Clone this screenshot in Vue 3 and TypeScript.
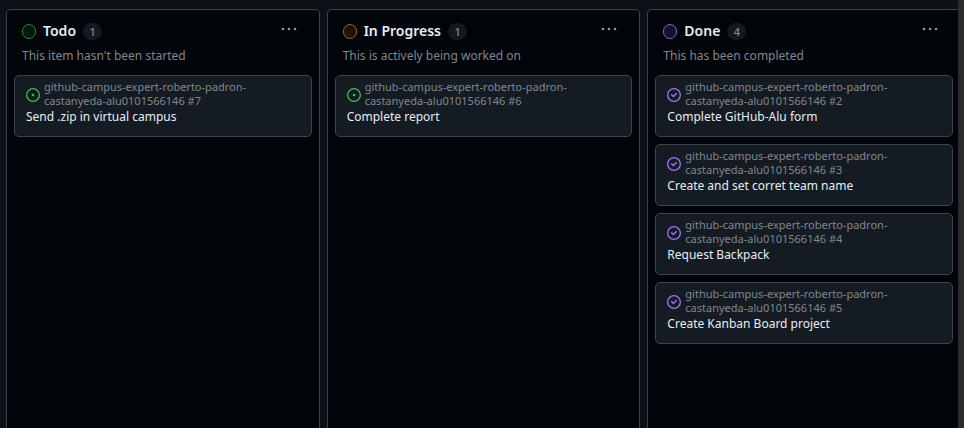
<script setup lang="ts">
type Tone = 'green' | 'amber' | 'purple'

interface Item {
  number: number
  title: string
}

interface Column {
  name: string
  description: string
  tone: Tone
  closed: boolean
  items: Item[]
}

const repository = 'github-campus-expert-roberto-padron-castanyeda-alu0101566146'

const columns: Column[] = [
  {
    name: 'Todo',
    description: "This item hasn't been started",
    tone: 'green',
    closed: false,
    items: [{ number: 7, title: 'Send .zip in virtual campus' }],
  },
  {
    name: 'In Progress',
    description: 'This is actively being worked on',
    tone: 'amber',
    closed: false,
    items: [{ number: 6, title: 'Complete report' }],
  },
  {
    name: 'Done',
    description: 'This has been completed',
    tone: 'purple',
    closed: true,
    items: [
      { number: 2, title: 'Complete GitHub-Alu form' },
      { number: 3, title: 'Create and set corret team name' },
      { number: 4, title: 'Request Backpack' },
      { number: 5, title: 'Create Kanban Board project' },
    ],
  },
]
</script>

<template>
  <div class="page">
    <main class="board">
      <div class="columns">
        <section v-for="column in columns" :key="column.name" class="column">
          <header class="column-header">
            <div class="heading">
              <span class="status" :class="column.tone"></span>
              <h2 class="name">{{ column.name }}</h2>
              <span class="count">{{ column.items.length }}</span>
              <button class="menu" type="button" :aria-label="`Actions for ${column.name}`">
                <svg viewBox="0 0 16 4" width="16" height="4" aria-hidden="true">
                  <circle cx="2" cy="2" r="1.3" />
                  <circle cx="8" cy="2" r="1.3" />
                  <circle cx="14" cy="2" r="1.3" />
                </svg>
              </button>
            </div>
            <p class="description">{{ column.description }}</p>
          </header>
          <ul class="cards">
            <li v-for="item in column.items" :key="item.number" class="card">
              <div class="reference">
                <svg v-if="column.closed" class="icon closed" viewBox="0 0 16 16" aria-hidden="true">
                  <path d="M11.28 6.78a.75.75 0 0 0-1.06-1.06L7.25 8.69 5.78 7.22a.75.75 0 0 0-1.06 1.06l2 2a.75.75 0 0 0 1.06 0l3.5-3.5Z" />
                  <path d="M16 8A8 8 0 1 1 0 8a8 8 0 0 1 16 0Zm-1.5 0a6.5 6.5 0 1 0-13 0 6.5 6.5 0 0 0 13 0Z" />
                </svg>
                <svg v-else class="icon open" viewBox="0 0 16 16" aria-hidden="true">
                  <path d="M8 9.5a1.5 1.5 0 1 0 0-3 1.5 1.5 0 0 0 0 3Z" />
                  <path d="M8 0a8 8 0 1 1 0 16A8 8 0 0 1 8 0ZM1.5 8a6.5 6.5 0 1 0 13 0 6.5 6.5 0 0 0-13 0Z" />
                </svg>
                <span class="repository">{{ repository }} #{{ item.number }}</span>
              </div>
              <h3 class="title">{{ item.title }}</h3>
            </li>
          </ul>
        </section>
      </div>
    </main>
    <div class="edge"></div>
  </div>
</template>

<style>
body {
  margin: 0;
  background: #0d1117;
}
</style>

<style scoped>
.page {
  display: flex;
  min-height: 100vh;
  background: #0d1017;
  color: #e6edf3;
  font-family: "Noto Sans", "Liberation Sans", sans-serif;
}

.board {
  display: flex;
  flex: 1;
  min-width: 0;
  box-sizing: border-box;
  padding: 9px 0 0 6px;
  overflow: hidden;
}

.edge {
  flex: none;
  width: 6px;
  background: #2c2b2a;
}

/* The last column runs on past the right edge of the board. */
.columns {
  display: flex;
  flex: 1;
  gap: 7px;
  margin-right: -3px;
}

.column {
  flex: 1 0 0;
  min-width: 260px;
  box-sizing: border-box;
  padding: 0 7px 7px;
  border: 1px solid #3d434b;
  border-bottom: 0;
  border-radius: 5px 5px 0 0;
  background: #010409;
}

.column-header {
  padding: 11px 8px 11px;
}

.heading {
  display: flex;
  align-items: center;
  height: 20px;
}

.status {
  box-sizing: border-box;
  width: 14px;
  height: 15px;
  border: 1px solid;
  border-radius: 7px;
}

.green {
  border-color: #238636;
  background: #07170f;
}

.amber {
  border-color: #9e6a03;
  background: #1c140a;
}

.purple {
  border-color: #8957e5;
  background: #17112a;
}

.name {
  margin: 0 0 0 7px;
  font-size: 14px;
  font-weight: 600;
  line-height: 20px;
}

.count {
  box-sizing: border-box;
  min-width: 19px;
  margin-left: 7px;
  padding: 0 6px;
  border-radius: 9px;
  background: #14181f;
  color: #848d97;
  font-size: 11px;
  font-weight: 500;
  line-height: 17px;
  text-align: center;
}

.menu {
  display: flex;
  align-self: flex-start;
  margin-left: auto;
  padding: 6px 7px;
  border: 0;
  background: none;
  color: #9198a1;
}

.menu svg {
  fill: currentColor;
}

.description {
  margin: 6px 0 0;
  color: #81868e;
  font-size: 12px;
  line-height: 17px;
}

.cards {
  display: grid;
  gap: 7px;
  margin: 0;
  padding: 0;
  list-style: none;
}

.card {
  box-sizing: border-box;
  padding: 4px 11px 11px;
  border: 1px solid #3d444d;
  border-radius: 5px;
  background: #151b23;
}

.reference {
  display: flex;
  align-items: center;
  gap: 4px;
}

.icon {
  flex: none;
  width: 14px;
  height: 14px;
  margin-top: 2px;
}

.open {
  fill: #3fb950;
}

.closed {
  fill: #a371f7;
}

.repository {
  max-width: 220px;
  color: #81868e;
  font-size: 11px;
  line-height: 14px;
}

.title {
  margin: 0;
  font-size: 12px;
  font-weight: 400;
  line-height: 17px;
}
</style>
